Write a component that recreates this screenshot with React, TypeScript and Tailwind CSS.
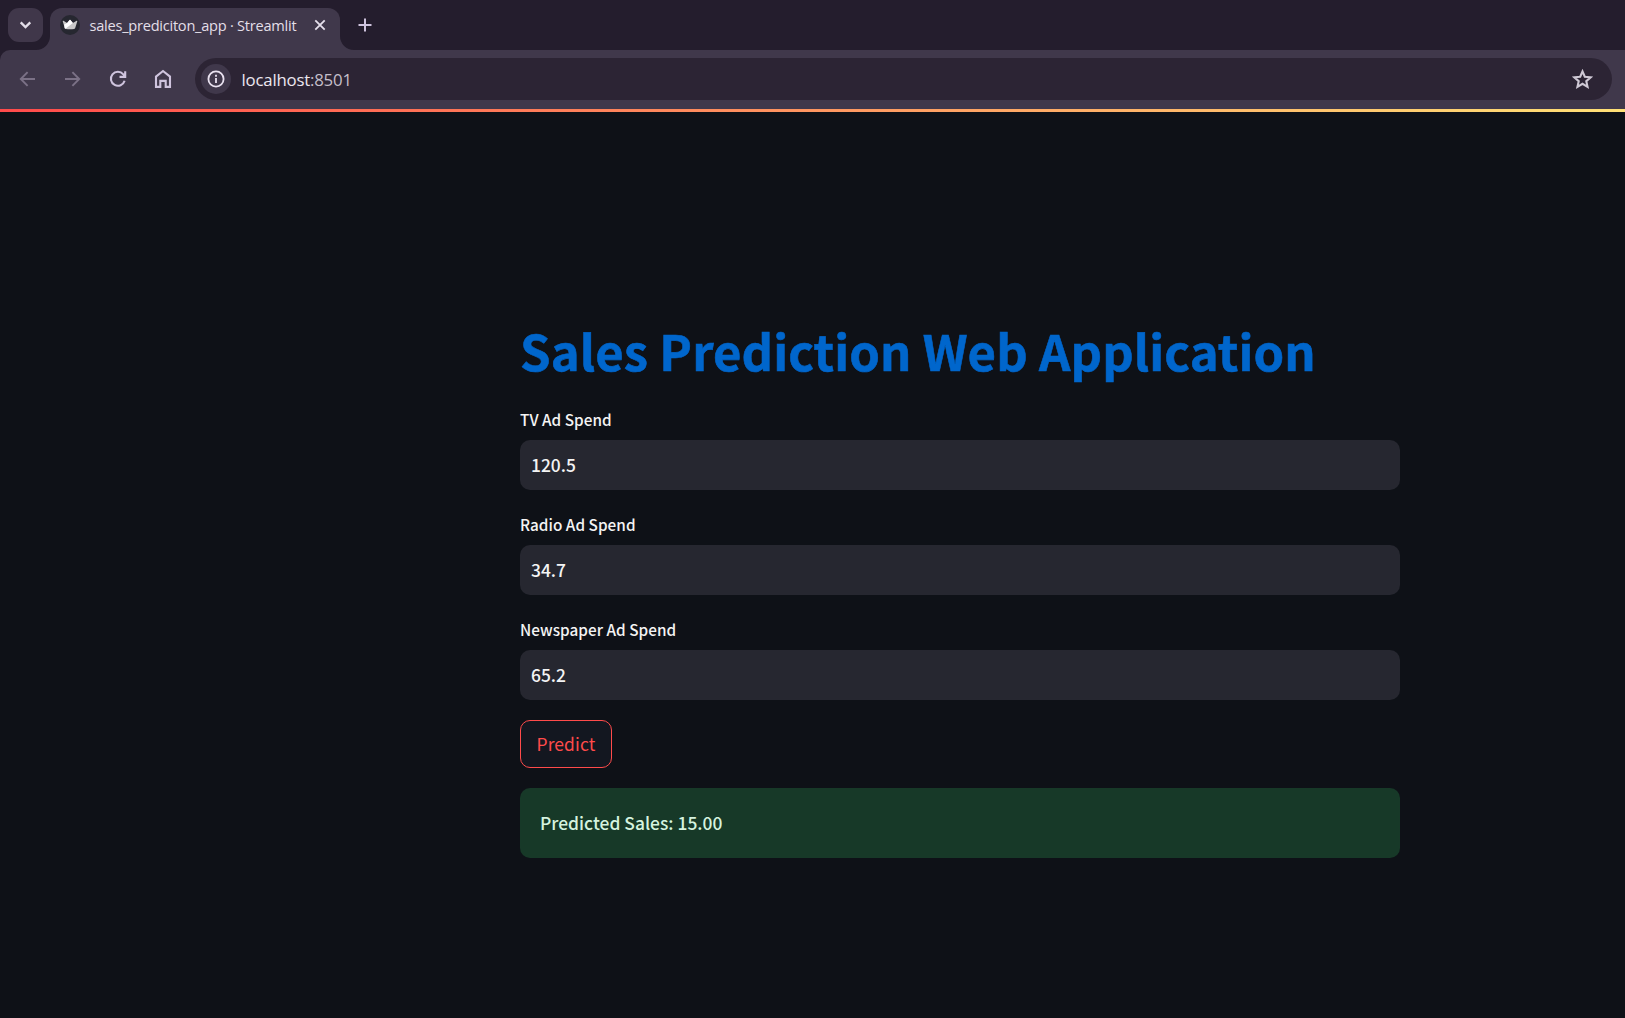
import React from "react";

const sans = "font-['Noto_Sans_CJK_SC',sans-serif]";

function TabStrip() {
  return (
    <div className="flex h-[50px] items-start pl-2">
      <button className="mt-2 flex h-[34px] w-[35px] items-center justify-center rounded-[11px] bg-[#40374a]">
        <svg width="12" height="8" viewBox="0 0 12 8" fill="none" stroke="#e3dee9" strokeWidth="2.3" className="block -translate-x-[0.5px]">
          <path d="M1.2 1.4 6 6.1l4.8-4.7" />
        </svg>
      </button>
      <svg width="14" height="14" viewBox="0 0 14 14" className="-ml-[7px] mt-9 block shrink-0" fill="#40384b">
        <path d="M14 0v14H0A14 14 0 0 0 14 0z" />
      </svg>
      <div className="mt-[7.5px] flex h-[42.5px] w-[290px] shrink-0 items-center rounded-t-[12px] bg-[#40384b] pb-2 pl-[10px]">
        <svg width="20" height="20" viewBox="0 0 20 20" className="block shrink-0">
          <circle cx="10" cy="10" r="10" fill="#262730" />
          <path d="M2.7 6.2q0-.7.7-.4L7.1 8 9.6 5q.4-.5.8 0L12.9 8l3.7-2.2q.7-.3.7.4L15.2 13q-.2.8-1 .9-4.2.5-8.4 0-.8-.1-1-.9z" fill="#c9c9c9" />
          <path d="M4.2 9.6 7.1 8 9.6 5q.4-.5.8 0L12.9 8 5.4 13.8q-.6-.2-.8-.8z" fill="#fff" />
        </svg>
        <span className="ml-[9.5px] w-[208.5px] whitespace-nowrap font-['Open_Sans',sans-serif] text-[14.6px] leading-5 tracking-[-0.25px] text-[#e3dfe8]">
          sales_prediciton_app · Streamlit
        </span>
        <svg width="12" height="12" viewBox="0 0 12 12" fill="none" stroke="#e6e0ec" strokeWidth="1.8" className="ml-[16px] block">
          <path d="m1.3 1.3 9.4 9.4M10.7 1.3l-9.4 9.4" />
        </svg>
      </div>
      <svg width="14" height="14" viewBox="0 0 14 14" className="mt-9 block shrink-0" fill="#40384b">
        <path d="M0 0v14h14A14 14 0 0 1 0 0z" />
      </svg>
      <svg width="14" height="14" viewBox="0 0 14 14" fill="none" stroke="#cfc4de" strokeWidth="2" className="ml-[4px] mt-[18px] block">
        <path d="M7 .5v13M.5 7h13" />
      </svg>
    </div>
  );
}

function Toolbar() {
  return (
    <div className="flex h-[59px] items-center rounded-tl-[10px] bg-[#40384b] pb-px pl-[19px] pr-[13px]">
      <svg width="17" height="16" viewBox="0 0 17 16" fill="none" stroke="#7b7186" strokeWidth="1.9" className="block">
        <path d="M8.6 1.2 1.8 8l6.8 6.8M2 8h14" />
      </svg>
      <svg width="17" height="16" viewBox="0 0 17 16" fill="none" stroke="#7b7186" strokeWidth="1.9" className="ml-7 block">
        <path d="M8.4 1.2 15.2 8l-6.8 6.8M15 8H1" />
      </svg>
      <svg width="18" height="18" viewBox="0 0 18 18" fill="none" stroke="#cfc4de" strokeWidth="2.1" className="ml-[27.5px] block">
        <path d="M15.6 10.7A7 7 0 1 1 14.3 4.3L16 6.2M16.2 1.2v5.7h-5.7" />
      </svg>
      <svg width="18" height="20" viewBox="0 0 18 20" fill="none" stroke="#cfc4de" strokeWidth="2.1" className="ml-[27px] block">
        <path d="M2 7.6 9 2l7 5.6v10.3h-4.3v-6H6.3v6H2z" />
      </svg>
      <div className="ml-[23.5px] flex h-[42px] flex-1 items-center rounded-full bg-[#2c2434] pl-[6px] pr-[19px]">
        <div className="flex size-[30px] items-center justify-center rounded-full bg-[#40384b]">
          <svg width="18" height="18" viewBox="0 0 18 18" fill="none" stroke="#e9e2f0" className="block">
            <circle cx="9" cy="9" r="7.6" strokeWidth="1.8" />
            <path d="M9 8v5M9 4.8v1.9" strokeWidth="1.8" />
          </svg>
        </div>
        <span className="ml-[10.5px] flex-1 whitespace-nowrap pt-px font-['Open_Sans',sans-serif] text-[16.8px] leading-6 tracking-[-0.2px] text-[#ece7f0]">
          localhost<span className="text-[#c5bfca]">:8501</span>
        </span>
        <svg width="21" height="21" viewBox="0 0 20 20" fill="none" stroke="#cfc9d5" strokeWidth="2" className="block">
          <path d="m10 2.3 2.2 5.1 5.6.5-4.2 3.7 1.2 5.4-4.8-2.9L5.2 17l1.2-5.4L2.2 7.9l5.6-.5z" />
        </svg>
      </div>
    </div>
  );
}

function Field({ label, value }: { label: string; value: string }) {
  return (
    <label className="mb-5 flex flex-col">
      <span className="mb-[6px] h-[29px] whitespace-nowrap text-[15.3px] font-medium leading-[29px] tracking-[0.04px] text-[#f4f4f4]">
        {label}
      </span>
      <span className="flex h-[50px] items-center rounded-[10px] bg-[#262730] pl-[11px] text-[17.4px] font-medium text-[#f4f4f4]">
        {value}
      </span>
    </label>
  );
}

export default function App() {
  return (
    <div className="flex h-[1018px] w-[1625px] flex-col overflow-hidden bg-[#241d2d]">
      <TabStrip />
      <Toolbar />
      <div className="h-[3px] bg-[linear-gradient(90deg,#ff4b4b,#ffe176)]" />
      <main className={`${sans} flex flex-1 flex-col bg-[#0e1117] pl-[520px] pr-[225px] pt-[208px]`}>
        <h1 className="h-[60px] whitespace-nowrap text-[49px] font-bold leading-[60px] tracking-[0.09px] text-[#0066cc] [-webkit-text-stroke:0.6px_#0066cc]">
          Sales Prediction Web Application
        </h1>
        <div className="mt-[25px] flex flex-col">
          <Field label="TV Ad Spend" value="120.5" />
          <Field label="Radio Ad Spend" value="34.7" />
          <Field label="Newspaper Ad Spend" value="65.2" />
        </div>
        <button className="flex h-12 w-[92px] items-center justify-center rounded-[10px] border border-[#ff4b4b] bg-[#131720] text-[17.4px] tracking-[0.15px] text-[#ff4b4b]">
          Predict
        </button>
        <div className="mt-5 flex h-[70px] items-center rounded-[10px] bg-[#173928] pl-5 text-[17.4px] font-medium tracking-[0.02px] text-[#d5f3df]">
          Predicted Sales: 15.00
        </div>
      </main>
    </div>
  );
}
